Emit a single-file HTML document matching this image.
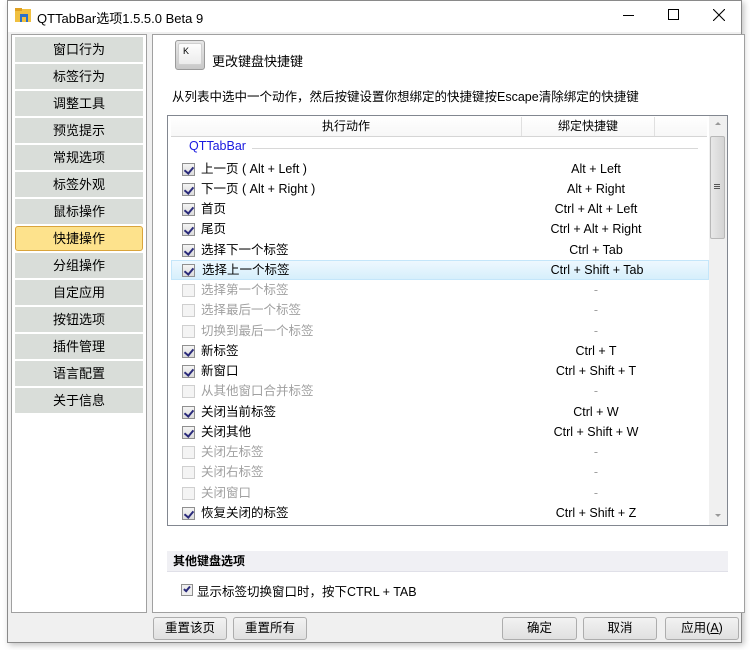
<!DOCTYPE html>
<html><head><meta charset="utf-8"><style>
*{margin:0;padding:0;box-sizing:border-box}
body{width:750px;height:650px;background:#fff;font-family:"Liberation Sans","Noto Sans CJK SC",sans-serif;font-size:12px;color:#000;position:relative;overflow:hidden}
.abs{position:absolute}
.win{left:7px;top:0;width:735px;height:643px;background:#f0f0f0;border:1px solid #8a8a8a;box-shadow:2px 2px 6px rgba(0,0,0,.25)}
.title{left:8px;top:1px;width:733px;height:31px;background:#fff}
.lp{left:11px;top:34px;width:136px;height:579px;background:#fff;border:1px solid #a0a0a0}
.nb{position:absolute;left:3px;width:128px;height:25px;background:#d9ddd9;text-align:center;line-height:25px;font-size:13px}
.nb.sel{background:#fde28c;border:1px solid #d9a43c;border-radius:3px;line-height:23px}
.rp{left:152px;top:34px;width:593px;height:579px;background:#fff;border:1px solid #a0a0a0}
.lb{left:167px;top:115px;width:561px;height:411px;border:1px solid #828790;background:#fff;overflow:hidden}
.row{position:absolute;left:0;width:540px;height:20px;font-size:12.5px;line-height:20px}
.cb{position:absolute;left:14px;top:4px;width:13px;height:13px;border:1px solid #8f8f8f;background:linear-gradient(#f4f4f4,#dcdcdc)}
.cb.on::after{content:"";position:absolute;left:3px;top:1px;width:4px;height:7px;border:solid #2a2a7a;border-width:0 2px 2px 0;transform:rotate(40deg)}
.cb.off{background:#f4f4f4;border-color:#cfcfcf}
.lab{position:absolute;left:33px}
.key{position:absolute;left:353px;width:150px;text-align:center}
.dis{color:#a0a0a0}
.btn{position:absolute;top:617px;height:23px;border:1px solid #adadad;background:linear-gradient(#f2f2f2,#e0e0e0);border-radius:3px;text-align:center;line-height:21px;font-size:12.5px}
</style></head><body>
<div class="abs win"></div>
<div class="abs title"></div>
<svg class="abs" style="left:15px;top:8px" width="17" height="15"><rect x="0" y="1" width="16" height="13" fill="#f0c040"/><rect x="0" y="0" width="7" height="3" fill="#e0a020"/><rect x="5" y="6" width="8" height="8" fill="#2a70c8"/><rect x="7" y="9" width="4" height="5" fill="#f0c040"/></svg>
<div class="abs" style="left:37px;top:8px;font-size:13px">QTTabBar选项1.5.5.0 Beta 9</div>
<div class="abs" style="left:623px;top:15px;width:11px;height:1px;background:#000"></div>
<div class="abs" style="left:668px;top:9px;width:11px;height:11px;border:1px solid #000"></div>
<svg class="abs" style="left:713px;top:9px" width="12" height="12"><path d="M0 0L12 12M12 0L0 12" stroke="#000" stroke-width="1.1"/></svg>

<div class="abs lp">
<div class="nb" style="top:2px">窗口行为</div>
<div class="nb" style="top:29px">标签行为</div>
<div class="nb" style="top:56px">调整工具</div>
<div class="nb" style="top:83px">预览提示</div>
<div class="nb" style="top:110px">常规选项</div>
<div class="nb" style="top:137px">标签外观</div>
<div class="nb" style="top:164px">鼠标操作</div>
<div class="nb sel" style="top:191px">快捷操作</div>
<div class="nb" style="top:218px">分组操作</div>
<div class="nb" style="top:245px">自定应用</div>
<div class="nb" style="top:272px">按钮选项</div>
<div class="nb" style="top:299px">插件管理</div>
<div class="nb" style="top:326px">语言配置</div>
<div class="nb" style="top:353px">关于信息</div>
</div>

<div class="abs rp"></div>
<div class="abs" style="left:175px;top:40px;width:30px;height:30px;border:1px solid #9a9a9a;border-radius:3px;background:linear-gradient(#e8e8e8,#c8c8c8)"><div style="position:absolute;left:2px;top:2px;width:24px;height:22px;border:1px solid #d0d0d0;border-radius:2px;background:linear-gradient(#fdfdfd,#ececec);font-size:9px;padding-left:4px;line-height:14px">K</div></div>
<div class="abs" style="left:212px;top:51px;font-size:13px">更改键盘快捷键</div>
<div class="abs" style="left:172px;top:86px;font-size:12.5px">从列表中选中一个动作，然后按键设置你想绑定的快捷键按Escape清除绑定的快捷键</div>

<div class="abs lb">
<div style="position:absolute;left:3px;top:1px;width:536px;height:20px;border-bottom:1px solid #d5d5d5;background:linear-gradient(#fff,#f7f7f7)">
<div style="position:absolute;left:0;width:350px;text-align:center;line-height:19px">执行动作</div>
<div style="position:absolute;left:350px;top:0;width:1px;height:19px;background:#e0e0e0"></div>
<div style="position:absolute;left:351px;width:132px;text-align:center;line-height:19px">绑定快捷键</div>
<div style="position:absolute;left:483px;top:0;width:1px;height:19px;background:#e0e0e0"></div>
</div>
<div style="position:absolute;left:21px;top:23px;color:#1a1ae0;font-size:12.5px">QTTabBar</div>
<div style="position:absolute;left:84px;top:32px;width:446px;height:1px;background:#d8d8d8"></div>
<div class="row" style="top:43px"><div class="cb on"></div><span class="lab">上一页 ( Alt + Left )</span><span class="key">Alt + Left</span></div>
<div class="row" style="top:63px"><div class="cb on"></div><span class="lab">下一页 ( Alt + Right )</span><span class="key">Alt + Right</span></div>
<div class="row" style="top:83px"><div class="cb on"></div><span class="lab">首页</span><span class="key">Ctrl + Alt + Left</span></div>
<div class="row" style="top:103px"><div class="cb on"></div><span class="lab">尾页</span><span class="key">Ctrl + Alt + Right</span></div>
<div class="row" style="top:124px"><div class="cb on"></div><span class="lab">选择下一个标签</span><span class="key">Ctrl + Tab</span></div>
<div class="row" style="top:144px;left:3px;width:538px;background:linear-gradient(#eef8fe,#d6effc);border:1px solid #c4e6fa"><div class="cb on" style="left:10px;top:3px"></div><span class="lab" style="left:30px;top:-1px;position:absolute">选择上一个标签</span><span class="key" style="left:350px;top:-1px">Ctrl + Shift + Tab</span></div>
<div class="row dis" style="top:164px"><div class="cb off"></div><span class="lab">选择第一个标签</span><span class="key">-</span></div>
<div class="row dis" style="top:184px"><div class="cb off"></div><span class="lab">选择最后一个标签</span><span class="key">-</span></div>
<div class="row dis" style="top:205px"><div class="cb off"></div><span class="lab">切换到最后一个标签</span><span class="key">-</span></div>
<div class="row" style="top:225px"><div class="cb on"></div><span class="lab">新标签</span><span class="key">Ctrl + T</span></div>
<div class="row" style="top:245px"><div class="cb on"></div><span class="lab">新窗口</span><span class="key">Ctrl + Shift + T</span></div>
<div class="row dis" style="top:265px"><div class="cb off"></div><span class="lab">从其他窗口合并标签</span><span class="key">-</span></div>
<div class="row" style="top:286px"><div class="cb on"></div><span class="lab">关闭当前标签</span><span class="key">Ctrl + W</span></div>
<div class="row" style="top:306px"><div class="cb on"></div><span class="lab">关闭其他</span><span class="key">Ctrl + Shift + W</span></div>
<div class="row dis" style="top:326px"><div class="cb off"></div><span class="lab">关闭左标签</span><span class="key">-</span></div>
<div class="row dis" style="top:346px"><div class="cb off"></div><span class="lab">关闭右标签</span><span class="key">-</span></div>
<div class="row dis" style="top:367px"><div class="cb off"></div><span class="lab">关闭窗口</span><span class="key">-</span></div>
<div class="row" style="top:387px"><div class="cb on"></div><span class="lab">恢复关闭的标签</span><span class="key">Ctrl + Shift + Z</span></div>
<div style="position:absolute;left:541px;top:0;width:18px;height:409px;background:#f0f0f0">
<div style="position:absolute;left:6px;top:6px;border:3px solid transparent;border-bottom:3px solid #999;border-top:0"></div>
<div style="position:absolute;left:1px;top:20px;width:15px;height:103px;border:1px solid #b8b8b8;background:linear-gradient(90deg,#e8e8e8,#d4d4d4);border-radius:2px"></div>
<div style="position:absolute;left:5px;top:68px;width:6px;height:5px;border-top:1px solid #555;border-bottom:1px solid #555"><div style="margin-top:1px;height:1px;background:#555"></div></div>
<div style="position:absolute;left:6px;top:398px;border:3px solid transparent;border-top:3px solid #999;border-bottom:0"></div>
</div>
</div>

<div class="abs" style="left:167px;top:551px;width:561px;height:21px;background:#f0f0f4;border-bottom:1px solid #e0e0e8;font-size:12px;line-height:20px;padding-left:6px;font-weight:bold">其他键盘选项</div>
<div class="abs" style="left:181px;top:584px;width:12px;height:12px;border:1px solid #8f8f8f;background:#eee"><div style="position:absolute;left:3px;top:0;width:4px;height:7px;border:solid #2a2a7a;border-width:0 2px 2px 0;transform:rotate(40deg)"></div></div>
<div class="abs" style="left:197px;top:581px;font-size:12.5px">显示标签切换窗口时，按下CTRL + TAB</div>

<div class="btn" style="left:153px;width:74px">重置该页</div>
<div class="btn" style="left:233px;width:74px">重置所有</div>
<div class="btn" style="left:502px;width:75px">确定</div>
<div class="btn" style="left:583px;width:74px">取消</div>
<div class="btn" style="left:665px;width:74px">应用(<u>A</u>)</div>
</body></html>
